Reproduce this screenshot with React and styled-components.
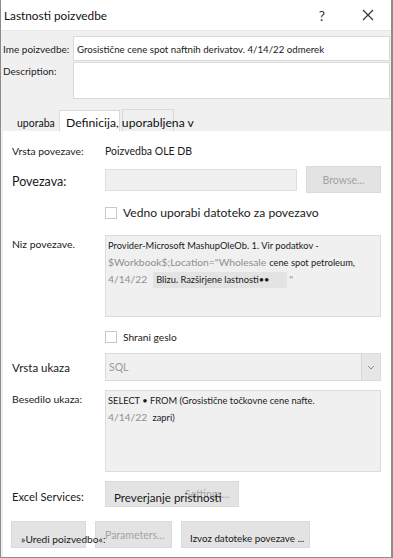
import React from 'react';
import styled, { createGlobalStyle } from 'styled-components';

const GlobalStyle = createGlobalStyle`
  html, body {
    margin: 0;
    padding: 0;
    background: #ffffff;
  }
  body {
    font-family: Lato, "Liberation Sans", Arial, sans-serif;
    color: #1a1a1a;
  }
`;

const Dialog = styled.div`
  width: 393px;
  height: 558px;
  box-sizing: border-box;
  background: #f0f0f0;
  border-left: 1px solid #8c8c8c;
  border-right: 2px solid #8c8c8c;
  border-bottom: 1px solid #8c8c8c;
  display: flex;
  flex-direction: column;
  overflow: hidden;
`;

const TitleBar = styled.div`
  height: 31px;
  flex: none;
  background: #ffffff;
  display: flex;
  align-items: center;
  padding-left: 3px;
  border-bottom: 1px solid #e6e6e6;
  box-sizing: border-box;
`;

const Title = styled.div`
  flex: 1;
  font-size: 11.8px;
  color: #111;
`;

const TitleButton = styled.div`
  width: 46px;
  height: 31px;
  display: flex;
  align-items: center;
  justify-content: center;
  font-size: 14px;
  color: #333;
`;

const HeaderGrid = styled.div`
  display: grid;
  grid-template-columns: 70px 1fr;
  row-gap: 1px;
  padding: 5px 1px 0 2px;
`;

const HeaderLabel = styled.div`
  font-size: 10px;
  color: #222;
  padding-top: ${p => p.$top || 0}px;
  display: flex;
  align-items: ${p => (p.$center ? 'center' : 'flex-start')};
  white-space: nowrap;
`;

const TextField = styled.div`
  height: ${p => p.$h}px;
  box-sizing: border-box;
  background: #ffffff;
  border: 1px solid #d9d9d9;
  font-size: 9.7px;
  display: flex;
  align-items: center;
  padding-left: 3px;
  white-space: nowrap;
  overflow: hidden;
`;

const TabStrip = styled.div`
  height: 32px;
  flex: none;
  display: flex;
  align-items: flex-end;
  padding-left: 7px;
`;

const Tab = styled.div`
  width: ${p => p.$w}px;
  height: ${p => p.$h}px;
  box-sizing: border-box;
  background: ${p => (p.$active ? '#ffffff' : 'transparent')};
  border: 1px solid ${p => (p.$outline ? '#d9d9d9' : 'transparent')};
  border-bottom: none;
  margin-right: ${p => p.$mr || 0}px;
  font-size: ${p => p.$fs}px;
  color: #111;
  white-space: nowrap;
  display: flex;
  align-items: center;
  padding-left: ${p => p.$pl || 0}px;
  padding-top: 3px;
  overflow: visible;
  position: relative;
  z-index: ${p => p.$z || 0};
`;

const Panel = styled.div`
  flex: 1;
  background: #ffffff;
  margin: 0 0 0 2px;
  padding: 0 0 0 9px;
  display: flex;
  flex-direction: column;
`;

const Row = styled.div`
  display: grid;
  grid-template-columns: 93px 276px;
  margin-top: ${p => p.$mt}px;
  align-items: ${p => p.$align || 'center'};
`;

const Label = styled.div`
  font-size: ${p => p.$fs || 10.4}px;
  color: #1a1a1a;
  white-space: nowrap;
  padding-top: ${p => p.$pt || 0}px;
`;

const Value = styled.div`
  font-size: 10.5px;
  color: #1a1a1a;
`;

const Control = styled.div`
  display: flex;
  align-items: center;
  gap: 9px;
`;

const DisabledInput = styled.div`
  width: 192px;
  height: 22px;
  box-sizing: border-box;
  background: #f0f0f0;
  border: 1px solid #dedede;
`;

const Button = styled.div`
  width: ${p => p.$w}px;
  height: ${p => p.$h || 27}px;
  flex: none;
  box-sizing: border-box;
  background: #e3e3e3;
  border: 1px solid #dadada;
  font-size: ${p => p.$fs || 10.5}px;
  color: ${p => (p.$disabled ? '#a3a3a3' : '#1a1a1a')};
  display: flex;
  align-items: center;
  padding-left: ${p => p.$pl || 0}px;
  padding-top: ${p => p.$pt || 0}px;
  justify-content: ${p => (p.$pl ? 'flex-start' : 'center')};
  white-space: nowrap;
  overflow: visible;
  position: relative;
`;

const ButtonText = styled.span`
  position: relative;
  z-index: 2;
  flex: none;
`;

const Overlay = styled.span`
  position: absolute;
  left: ${p => p.$left}px;
  top: ${p => p.$top}px;
  font-size: 10.5px;
  color: #a3a3a3;
`;

const CheckRow = styled.label`
  grid-column: 2;
  display: flex;
  align-items: center;
  gap: 6px;
  font-size: ${p => p.$fs}px;
  color: #1a1a1a;
`;

const Box = styled.span`
  width: 12px;
  height: 12px;
  box-sizing: border-box;
  border: 1px solid #c8c8c8;
  background: #ffffff;
  flex: none;
`;

const ReadArea = styled.div`
  height: 82px;
  box-sizing: border-box;
  background: #f0f0f0;
  border: 1px solid #dcdcdc;
  padding: 2px 4px 0 2px;
  font-size: 9.3px;
  line-height: 16px;
  color: #1a1a1a;
  white-space: nowrap;
  overflow: hidden;
`;

const Dim = styled.span`
  color: #8f8f8f;
  font-size: 10.3px;
  margin-right: 3px;
`;

const Highlight = styled.span`
  background: #e3e3e3;
  display: inline-block;
  width: 131px;
  padding-left: 3px;
  margin-left: 3px;
  margin-right: 2px;
`;

const Select = styled.div`
  height: 28px;
  box-sizing: border-box;
  background: #f0f0f0;
  border: 1px solid #dadada;
  display: flex;
  align-items: center;
  font-size: 10.5px;
  color: #9a9a9a;
`;

const SelectText = styled.div`
  flex: 1;
  padding-left: 3px;
`;

const SelectArrow = styled.div`
  width: 18px;
  height: 26px;
  background: #e6e6e6;
  border-left: 1px solid #d6d6d6;
  display: flex;
  align-items: center;
  justify-content: center;
`;

const ButtonRow = styled.div`
  display: flex;
  gap: 9px;
  margin-top: 14px;
  margin-left: -1px;
`;

const Chevron = () => (
  <svg width="8" height="5" viewBox="0 0 8 5">
    <path d="M1 1 L4 4 L7 1" stroke="#8a8a8a" strokeWidth="1" fill="none" />
  </svg>
);

const CloseIcon = () => (
  <svg width="12" height="12" viewBox="0 0 12 12">
    <path d="M1 1 L11 11 M11 1 L1 11" stroke="#333" strokeWidth="1.2" fill="none" />
  </svg>
);

export default function App() {
  return (
    <>
      <GlobalStyle />
      <Dialog>
        <TitleBar>
          <Title>Lastnosti poizvedbe</Title>
          <TitleButton>?</TitleButton>
          <TitleButton>
            <CloseIcon />
          </TitleButton>
        </TitleBar>

        <HeaderGrid>
          <HeaderLabel $center>Ime poizvedbe:</HeaderLabel>
          <TextField $h={25}>Grosistične cene spot naftnih derivatov. 4/14/22 odmerek</TextField>
          <HeaderLabel $top={3}>Description:</HeaderLabel>
          <TextField $h={37} />
        </HeaderGrid>

        <TabStrip>
          <Tab $w={51} $h={20} $fs={10.5} $pl={8}>uporaba</Tab>
          <Tab $w={61} $h={21} $fs={12.2} $pl={6} $active $outline $mr={2} $z={2}>
            Definicija, uporabljena v
          </Tab>
          <Tab $w={52} $h={22} $fs={11} $outline />
        </TabStrip>

        <Panel>
          <Row $mt={14}>
            <Label>Vrsta povezave:</Label>
            <Value>Poizvedba OLE DB</Value>
          </Row>

          <Row $mt={9}>
            <Label $fs={12.5} $pt={3}>Povezava:</Label>
            <Control>
              <DisabledInput />
              <Button $w={75} $disabled>Browse...</Button>
            </Control>
          </Row>

          <Row $mt={12}>
            <CheckRow $fs={12.1}>
              <Box />
              Vedno uporabi datoteko za povezavo
            </CheckRow>
          </Row>

          <Row $mt={15} $align="start">
            <Label $pt={3}>Niz povezave.</Label>
            <ReadArea>
              Provider-Microsoft MashupOleOb. 1. Vir podatkov -<br />
              <Dim>$Workbook$;Location="Wholesale</Dim>cene spot petroleum,<br />
              <Dim>4/14/22</Dim>
              <Highlight>Blizu. Razširjene lastnosti••</Highlight><Dim>"</Dim>
            </ReadArea>
          </Row>

          <Row $mt={14}>
            <CheckRow $fs={10.2}>
              <Box />
              Shrani geslo
            </CheckRow>
          </Row>

          <Row $mt={10}>
            <Label $fs={11.5}>Vrsta ukaza</Label>
            <Select>
              <SelectText>SQL</SelectText>
              <SelectArrow>
                <Chevron />
              </SelectArrow>
            </Select>
          </Row>

          <Row $mt={9} $align="start">
            <Label $pt={3}>Besedilo ukaza:</Label>
            <ReadArea>
              SELECT • FROM (Grosistične točkovne cene nafte.<br />
              <Dim>4/14/22</Dim> zapri)
            </ReadArea>
          </Row>

          <Row $mt={9}>
            <Label $fs={11.2} $pt={4}>Excel Services:</Label>
            <Control>
              <Button $w={134} $h={26} $fs={11.6} $pl={8} $pt={6}>
                <Overlay $left={79} $top={6}>Settings...</Overlay>
                <ButtonText>Preverjanje pristnosti</ButtonText>
              </Button>
            </Control>
          </Row>

          <ButtonRow>
            <Button $w={75} $pl={9} $pt={8} $fs={10.2}>
              <ButtonText>»Uredi poizvedbo«:</ButtonText>
            </Button>
            <Button $w={77} $pl={9} $disabled>Parameters...</Button>
            <Button $w={129} $pl={8} $pt={7} $fs={9.8}>Izvoz datoteke povezave ...</Button>
          </ButtonRow>
        </Panel>
      </Dialog>
    </>
  );
}
